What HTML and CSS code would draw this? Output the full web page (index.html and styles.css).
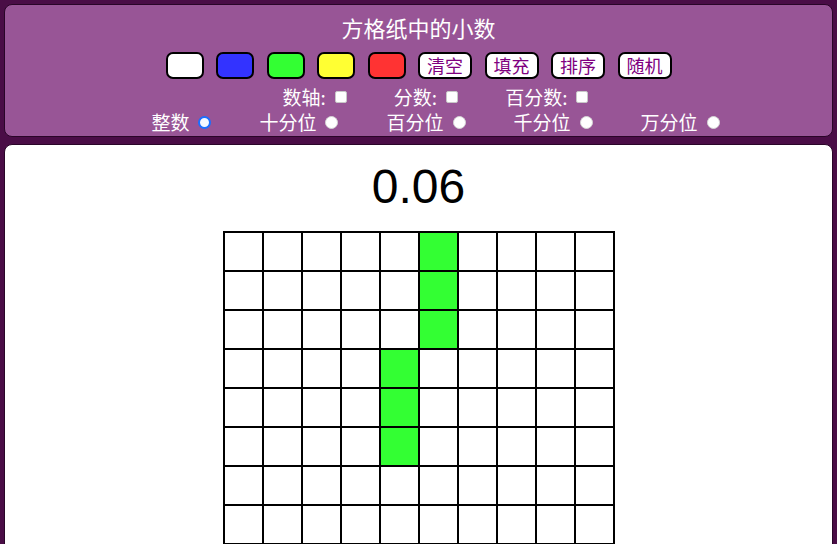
FILE: index.html
```html
<!DOCTYPE html>
<html lang="zh">
<head>
<meta charset="utf-8">
<title>方格纸中的小数</title>
<link rel="stylesheet" href="styles.css">
</head>
<body>
<header class="panel head">
  <div class="title">方格纸中的小数</div>
  <div class="tools">
    <span class="swatch white"></span>
    <span class="swatch blue"></span>
    <span class="swatch green"></span>
    <span class="swatch yellow"></span>
    <span class="swatch red"></span>
    <span class="btn">清空</span>
    <span class="btn">填充</span>
    <span class="btn">排序</span>
    <span class="btn">随机</span>
  </div>
  <div class="opts">
    <span class="opt">数轴:<span class="check"></span></span>
    <span class="opt">分数:<span class="check"></span></span>
    <span class="opt">百分数:<span class="check"></span></span>
  </div>
  <div class="opts row2">
    <span class="opt">整数<span class="radio on"></span></span>
    <span class="opt">十分位<span class="radio"></span></span>
    <span class="opt">百分位<span class="radio"></span></span>
    <span class="opt">千分位<span class="radio"></span></span>
    <span class="opt">万分位<span class="radio"></span></span>
  </div>
</header>
<main class="panel board">
  <div class="value">0.06</div>
  <div class="grid">
    <i></i><i></i><i></i><i></i><i></i><i class="g"></i><i></i><i></i><i></i><i></i>
    <i></i><i></i><i></i><i></i><i></i><i class="g"></i><i></i><i></i><i></i><i></i>
    <i></i><i></i><i></i><i></i><i></i><i class="g"></i><i></i><i></i><i></i><i></i>
    <i></i><i></i><i></i><i></i><i class="g"></i><i></i><i></i><i></i><i></i><i></i>
    <i></i><i></i><i></i><i></i><i class="g"></i><i></i><i></i><i></i><i></i><i></i>
    <i></i><i></i><i></i><i></i><i class="g"></i><i></i><i></i><i></i><i></i><i></i>
    <i></i><i></i><i></i><i></i><i></i><i></i><i></i><i></i><i></i><i></i>
    <i></i><i></i><i></i><i></i><i></i><i></i><i></i><i></i><i></i><i></i>
    <i></i><i></i><i></i><i></i><i></i><i></i><i></i><i></i><i></i><i></i>
    <i></i><i></i><i></i><i></i><i></i><i></i><i></i><i></i><i></i><i></i>
  </div>
</main>
</body>
</html>
```
FILE: styles.css
```css
html, body {
  margin: 0;
  background: #4a0d46;
}
body {
  padding: 4px;
  font-family: "Noto Sans CJK SC", "Noto Sans", sans-serif;
  overflow: hidden;
  height: 536px;
}
.panel {
  border: 1px solid #2a0528;
  border-radius: 8px;
  box-sizing: border-box;
}
.head {
  background: #985596;
  color: #fff;
  padding: 7px 0 2px;
  height: 133px;
}
.title {
  text-align: center;
  font-size: 22px;
  line-height: 30px;
}
.tools {
  display: flex;
  justify-content: center;
  gap: 12.5px;
  margin-top: 10px;
}
.swatch, .btn {
  box-sizing: border-box;
  height: 27px;
  border: 2px solid #000;
  border-radius: 7px;
}
.swatch { width: 38px; }
.white { background: #fff; }
.blue { background: #3333ff; }
.green { background: #33ff33; }
.yellow { background: #ffff33; }
.red { background: #ff3333; }
.btn {
  width: 54px;
  background: #fff;
  color: #800080;
  font-size: 18px;
  line-height: 23px;
  text-align: center;
}
.opts {
  display: flex;
  justify-content: center;
  gap: 47px;
  padding-left: 34px;
  margin-top: 6px;
  font-size: 19px;
  line-height: 24px;
}
.row2 {
  margin-top: 1px;
  gap: 48px;
}
.opt {
  display: inline-flex;
  align-items: center;
}
.check {
  width: 12px;
  height: 12px;
  box-sizing: border-box;
  margin-left: 9px;
  background: #fff;
  border: 1px solid #c8c8c8;
  border-radius: 2px;
}
.radio {
  width: 13px;
  height: 13px;
  box-sizing: border-box;
  margin-left: 9px;
  background: #fff;
  border: 1px solid #d6d6d6;
  border-radius: 50%;
}
.radio.on {
  border: 2px solid #1a6fff;
  background: #f4f8ff;
}
.board {
  background: #fff;
  margin-top: 7px;
  padding-top: 14px;
  height: 420px;
}
.value {
  text-align: center;
  font-family: "Liberation Sans", Arial, sans-serif;
  font-size: 48px;
  line-height: 56px;
  color: #000;
}
.grid {
  margin: 16px auto 0;
  width: 392px;
  display: grid;
  grid-template-columns: repeat(10, 37px);
  grid-auto-rows: 37px;
  gap: 2px;
  padding: 2px;
  box-sizing: border-box;
  background: #000;
}
.grid i {
  background: #fff;
}
.grid i.g {
  background: #33ff33;
}
```
